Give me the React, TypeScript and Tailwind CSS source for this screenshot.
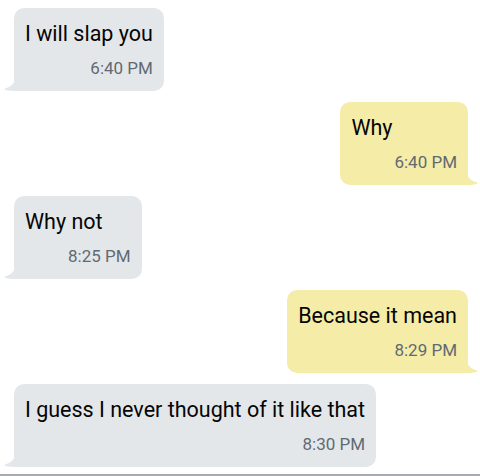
const messages = [
  { id: 1, text: "I will slap you", time: "6:40 PM", mine: false },
  { id: 2, text: "Why", time: "6:40 PM", mine: true },
  { id: 3, text: "Why not", time: "8:25 PM", mine: false },
  { id: 4, text: "Because it mean", time: "8:29 PM", mine: true },
  { id: 5, text: "I guess I never thought of it like that", time: "8:30 PM", mine: false },
];

const Tail = ({ mine }: { mine: boolean }) => (
  <svg
    width="12"
    height="16"
    viewBox="0 0 12 16"
    className={
      mine
        ? "absolute -right-[10px] bottom-0 -scale-x-100 fill-[#f5eca7]"
        : "absolute -left-[10px] bottom-0 fill-[#e4e7ea]"
    }>
    <path d="M12 0 C12 7 8 11.5 1.5 13.2 C0.2 13.6 0.4 14.6 1.6 15 C4 15.8 8 16 12 16 Z" />
  </svg>
);

const Bubble = ({ text, time, mine }: { text: string; time: string; mine: boolean }) => (
  <div className={mine ? "flex justify-end" : "flex justify-start"}>
    <div
      className={`relative flex flex-col px-[11px] pt-3 pb-[12px] ${
        mine ? "bg-[#f5eca7] rounded-[10px] rounded-br-none" : "bg-[#e4e7ea] rounded-[10px] rounded-bl-none"
      }`}>
      <div className="text-[21.5px] leading-[28px] text-[#050505] whitespace-nowrap">{text}</div>
      <div className="mt-[10px] pl-[43px] text-right text-[17px] leading-[21px] text-[#5f6a72] whitespace-nowrap">
        {time}
      </div>
      <Tail mine={mine} />
    </div>
  </div>
);

export default function App() {
  return (
    <div
      className="h-[476px] w-[480px] overflow-hidden bg-white border-b-2 border-[#a7abb0] pl-[14px] pr-[12px] pt-[8px] flex flex-col gap-[11px]"
      style={{ fontFamily: "Roboto, 'Noto Sans', sans-serif" }}>
      {messages.map((m) => (
        <Bubble key={m.id} text={m.text} time={m.time} mine={m.mine} />
      ))}
    </div>
  );
}
